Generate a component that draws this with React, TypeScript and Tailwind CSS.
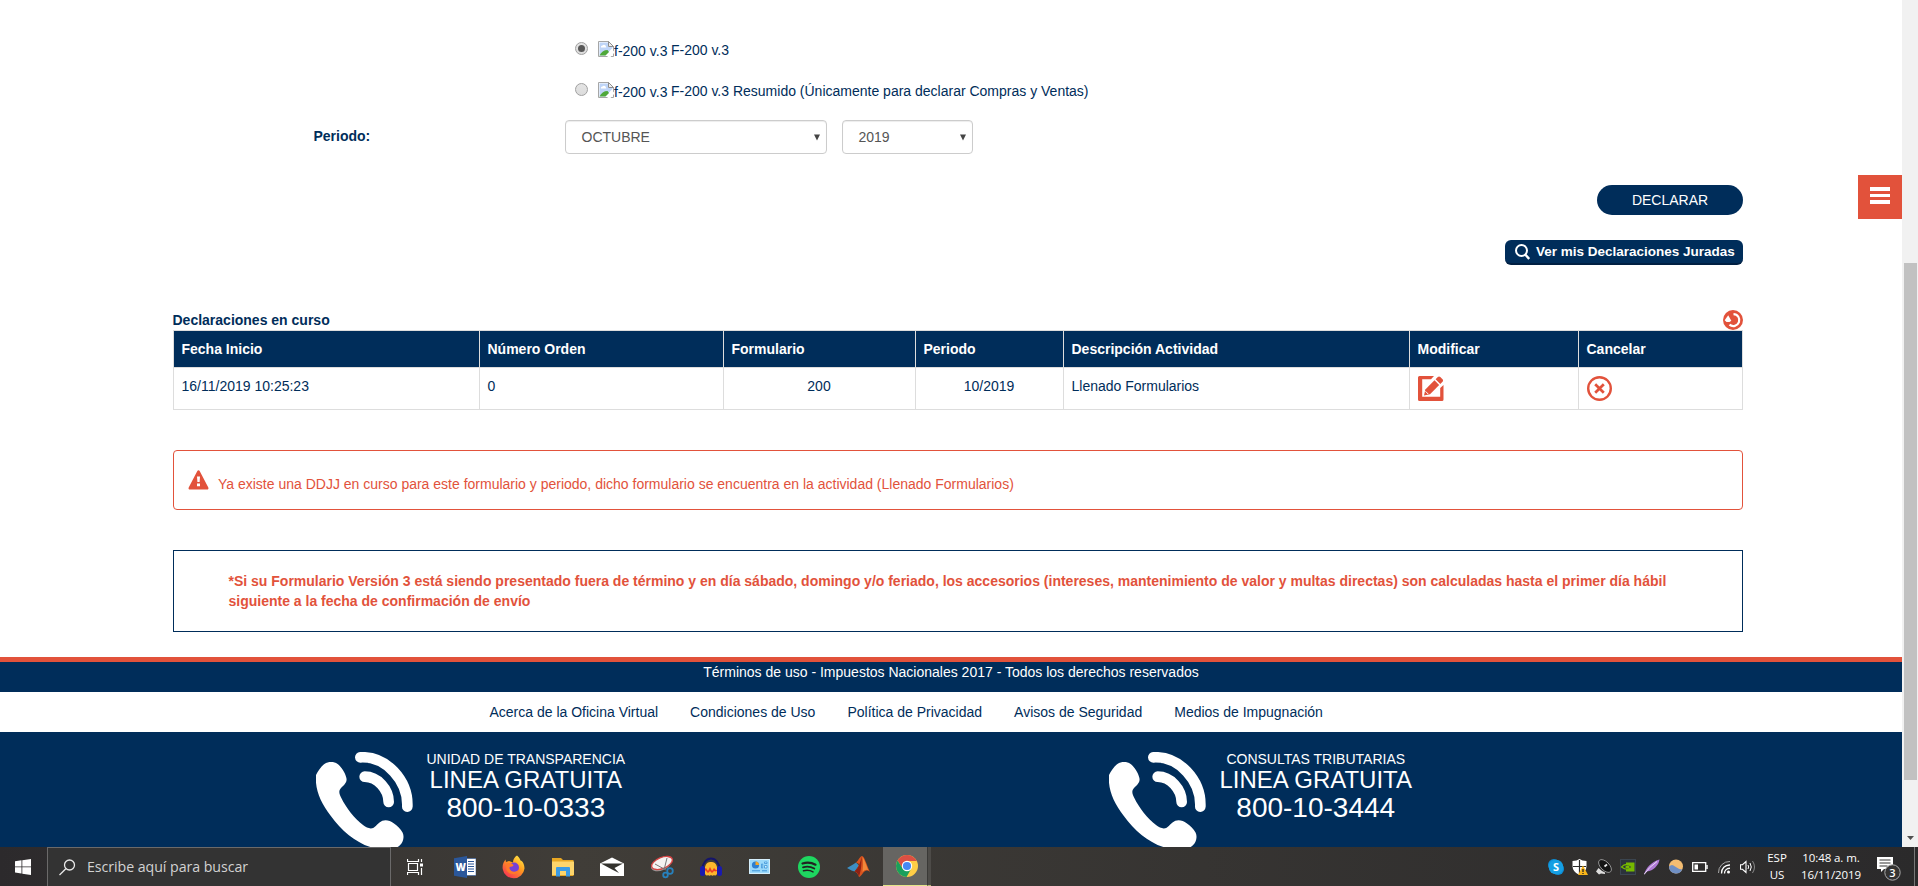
import type { ReactNode } from "react";

function BrokenImage() {
  return (
    <svg width="16" height="16" viewBox="0 0 16 16" className="mt-px shrink-0">
      <path d="M.5.5h10l5 5v10H.5z" fill="#fff" stroke="#a6a6a6" />
      <path d="M1.5 1.5h8.500v4.500h4.500v1L7 14.500H1.500z" fill="#bfd5f8" />
      <path d="M10.500.5v5h5z" fill="#eee" stroke="#8c8c8c" />
      <path d="M3 6.500a1.500 1.500 0 0 1 1.500-2 2 2 0 0 1 3.500 1.500l.5.5z" fill="#fff" />
      <path d="M1.500 14.500c1.500-3.500 4.500-5.500 8-5.500l1.500 2-3.500 3.500z" fill="#4fa83a" />
      <path d="M9 16 16 9.500v2.500L12.500 16z" fill="#fff" />
    </svg>
  );
}

function Radio({ checked }: { checked?: boolean }) {
  return (
    <span className="mt-[1.500px] mr-[10.500px] flex size-[13px] shrink-0 items-center justify-center rounded-full border border-[#a0a0a0] bg-gradient-to-b from-[#e4e4e4] to-[#dcdcdc]">
      {checked && <span className="size-[7px] rounded-full bg-[#585858]" />}
    </span>
  );
}

function FormOption({ label, checked }: { label: string; checked?: boolean }) {
  return (
    <label className="flex h-[41px] items-start whitespace-nowrap">
      <Radio checked={checked} />
      <BrokenImage />
      <span className="mt-px">f-200 v.3</span>
      <span className="ml-[3.500px]">{label}</span>
    </label>
  );
}

function Select({ value, className }: { value: string; className: string }) {
  return (
    <div
      className={`flex h-[34px] items-center justify-between rounded border border-[#ccc] bg-white pl-4 text-[#555] shadow-[inset_0_1px_1px_rgba(0,0,0,0.075)] ${className}`}
    >
      <span>{value}</span>
      <svg width="6" height="7" viewBox="0 0 6 7">
        <path d="M0 .5h6L3 6.500z" fill="#444" />
      </svg>
    </div>
  );
}

function Phone() {
  return (
    <svg width="97" height="95" viewBox="0 0 291 285" className="shrink-0">
      <path
        fill="#fff"
        d="M0 69C6 57 14 46 24 37c12-9 31-9 42 0 11 9 21 25 25 40 2 8 0 14-5 20-5 6-12 11-15 17-3 8 1 16 5 24 14 29 39 61 66 82 10 8 22 12 31 7 9-6 15-17 26-21 12-4 24 0 34 8 11 8 21 17 27 28 4 9 3 20-1 28-3 6-8 11-14 15h-82C117 270 75 234 44 191 20 159 3 127 0 92z"
      />
      <g fill="none" stroke="#fff" strokeWidth="32" strokeLinecap="round">
        <path d="M133 16c78-4 144 70 141 148" />
        <path d="M146 74c39 0 72 38 72 76" />
      </g>
    </svg>
  );
}

function Hotline({ title, phone, className }: { title: string; phone: string; className: string }) {
  return (
    <div className={`flex ${className}`}>
      <Phone />
      <div className="-mt-[3px] ml-[13.500px] flex flex-col items-center whitespace-nowrap text-white">
        <span className="h-[18px] leading-5">{title}</span>
        <span className="h-[26px] text-2xl leading-[26px]">LINEA GRATUITA</span>
        <span className="text-[28px] leading-[30px]">{phone}</span>
      </div>
    </div>
  );
}

const columns = [
  ["Fecha Inicio", "w-[306px]"],
  ["Número Orden", "w-[244px]"],
  ["Formulario", "w-[192px]"],
  ["Periodo", "w-[148px]"],
  ["Descripción Actividad", "w-[346px]"],
  ["Modificar", "w-[169px]"],
  ["Cancelar", "w-[164px]"],
];

function Cell({ children, center }: { children: ReactNode; center?: boolean }) {
  return (
    <td className={`border border-[#ddd] px-2 pt-2 align-top ${center ? "text-center" : ""}`}>{children}</td>
  );
}

function DeclarationsTable() {
  return (
    <table className="w-[1569px] table-fixed border-collapse">
      <thead>
        <tr className="h-[37px] bg-[#002d5a] text-left text-white">
          {columns.map(([name, width]) => (
            <th key={name} className={`border border-[#ddd] px-2 font-bold ${width}`}>
              {name}
            </th>
          ))}
        </tr>
      </thead>
      <tbody>
        <tr className="h-[42px]">
          <Cell>16/11/2019 10:25:23</Cell>
          <Cell>0</Cell>
          <Cell center>200</Cell>
          <Cell center>10/2019</Cell>
          <Cell>Llenado Formularios</Cell>
          <Cell>
            <svg width="26" height="25" viewBox="0 0 26 25" className="block">
              <path
                d="M1.500 0H16l-3 3.300H4.200v17.500h18V12L25.500 9v14.500q0 1.500-1.500 1.500H1.500Q0 25 0 23.500v-22Q0 0 1.500 0z"
                fill="#e2523b"
              />
              <path d="M6 19.500l1.300-6 9.200-9.200 4.700 4.700-9.200 9.200z" fill="#e2523b" />
              <path d="M17.600 3.200 19.800 1c.8-.8 1.800-.7 2.500 0l2.200 2.200c.8.8.8 1.700 0 2.500l-2.200 2.200z" fill="#e2523b" />
              <path d="M7.500 15.300 10.200 18" stroke="#fff" strokeWidth="1" />
            </svg>
          </Cell>
          <Cell>
            <svg width="25" height="25" viewBox="0 0 25 25" fill="none" stroke="#e2523b" className="block">
              <circle cx="12.500" cy="12.500" r="11.300" strokeWidth="2.400" />
              <path d="m8.200 8.200 8.600 8.600m0-8.600-8.600 8.600" strokeWidth="2.700" />
            </svg>
          </Cell>
        </tr>
      </tbody>
    </table>
  );
}

function WebPage() {
  return (
    <main className="relative h-[847px] w-[1902px] overflow-hidden bg-white">
      <section className="ml-[172.500px] h-[657px] w-[1570px] pt-10">
        <div className="pl-[402px]">
          <FormOption label="F-200 v.3" checked />
          <FormOption label="F-200 v.3 Resumido (Únicamente para declarar Compras y Ventas)" />
        </div>
        <div className="-mt-0.5 flex h-[34px]">
          <strong className="mt-1.5 w-[392px] pl-[141px]">Periodo:</strong>
          <Select value="OCTUBRE" className="w-[262px] pr-[6px]" />
          <Select value="2019" className="ml-[15px] w-[131px] pr-[6px]" />
        </div>
        <div className="mt-[31px] flex flex-col items-end">
          <button className="flex h-[30px] w-[146px] items-center justify-center rounded-full bg-[#002d5a] pl-px text-white">
            DECLARAR
          </button>
          <button className="mt-[25px] flex h-[25px] w-[238px] items-center rounded-[6px] border-b-2 border-[#001f42] bg-[#002d5a] pt-px pl-[10px] text-[13.500px] font-bold whitespace-nowrap text-white">
            <svg width="15" height="16" viewBox="0 0 15 16" fill="none" stroke="#fff" strokeWidth="2">
              <circle cx="6.500" cy="6.500" r="5.500" />
              <path d="m10.200 10.500 4 4.500" strokeWidth="2.400" />
            </svg>
            <span className="ml-[6.500px]">Ver mis Declaraciones Juradas</span>
          </button>
        </div>
        <div className="mt-[45px] flex h-5 items-start justify-between">
          <strong>Declaraciones en curso</strong>
          <svg width="20" height="20" viewBox="0 0 20 20">
            <circle cx="10" cy="10" r="10" fill="#e2523b" />
            <path d="M10.500 4.100a6 6 0 1 1-4 10.600" fill="none" stroke="#fff" strokeWidth="2.200" />
            <path d="M1.700 10.300 5.200 5.300 8.300 10.800 6.500 12H3.500z" fill="#fff" />
          </svg>
        </div>
        <DeclarationsTable />
        <div className="mt-[40px] flex h-[60px] rounded border border-[#e2523b] pt-[19px] pl-[14.500px] text-[#e2523b]">
          <svg width="21" height="20" viewBox="0 0 21 20">
            <path d="M9.200 1.200c.6-1.200 2-1.200 2.600 0l8.500 16.200c.5 1-.1 2.100-1.200 2.100H1.900c-1.100 0-1.700-1.100-1.200-2.100z" fill="#e2523b" />
            <path d="M9 6.500h3l-.4 5.500H9.400zM9 13.500h3v2.700H9z" fill="#fff" />
          </svg>
          <span className="mt-1 ml-[9px]">
            Ya existe una DDJJ en curso para este formulario y periodo, dicho formulario se encuentra en la actividad (Llenado Formularios)
          </span>
        </div>
        <p className="mt-10 h-[82px] border border-[#002d5a] px-[55px] pt-5 font-bold text-[#e2523b]">
          *Si su Formulario Versión 3 está siendo presentado fuera de término y en día sábado, domingo y/o feriado, los accesorios (intereses, mantenimiento de valor y multas directas) son calculadas hasta el primer día hábil
          <br />
          siguiente a la fecha de confirmación de envío
        </p>
      </section>
      <footer>
        <div className="h-[35px] border-t-[5px] border-[#e2523b] bg-[#002d5a] text-center text-white">
          Términos de uso - Impuestos Nacionales 2017 - Todos los derechos reservados
        </div>
        <nav className="flex h-10 items-center gap-8 pl-[489.500px] whitespace-nowrap">
          <a>Acerca de la Oficina Virtual</a>
          <a>Condiciones de Uso</a>
          <a>Política de Privacidad</a>
          <a>Avisos de Seguridad</a>
          <a>Medios de Impugnación</a>
        </nav>
        <div className="flex h-[115px] bg-[#002d5a] pt-5 pl-[316px]">
          <Hotline title="UNIDAD DE TRANSPARENCIA" phone="800-10-0333" className="w-[793px]" />
          <Hotline title="CONSULTAS TRIBUTARIAS" phone="800-10-3444" className="" />
        </div>
      </footer>
      <button className="absolute top-[175px] right-0 flex size-11 flex-col items-center gap-[3px] bg-[#e2523b] pt-3">
        <span className="h-[3.500px] w-5 bg-white" />
        <span className="h-[3.500px] w-5 bg-white" />
        <span className="h-[3.500px] w-5 bg-white" />
      </button>
    </main>
  );
}

function Scrollbar() {
  return (
    <div className="flex h-[847px] w-4 flex-col items-center bg-[#f1f1f1] pt-[263px]">
      <div className="h-[517px] w-[13px] bg-[#c1c1c1]" />
      <svg width="7" height="4" viewBox="0 0 7 4" className="mt-[56px]">
        <path d="M0 0h7L3.500 4z" fill="#505050" />
      </svg>
    </div>
  );
}

function TaskItem({ children }: { children: ReactNode }) {
  return <div className="flex h-[39px] w-[49.200px] items-center justify-center">{children}</div>;
}

function TaskApps() {
  return (
    <div className="flex">
      <TaskItem>
        <svg width="17" height="16" viewBox="0 0 17 16" fill="none" stroke="#fff">
          <path d="M.5 0v2.500h11V0M.5 16v-2.500h11V16M1.500 4.500h9v7h-9zM14.500 0v3M14.500 9v7" strokeWidth="1.200" />
          <path d="M13 4.500h3v3h-3z" fill="#fff" stroke="none" />
        </svg>
      </TaskItem>
      <TaskItem>
        <svg width="22" height="22" viewBox="0 0 22 22">
          <path d="M12 2.500h10v17H12z" fill="#fff" stroke="#2b579a" strokeWidth=".6" />
          <path d="M14 5.500h6M14 8h6M14 10.500h6M14 13h6M14 15.500h6" stroke="#2b579a" strokeWidth="1.200" />
          <path d="m0 2.200 13-2.200v22L0 19.800z" fill="#2b579a" />
          <text x="1.400" y="14.700" fontSize="10" fontWeight="800" fill="#fff" fontFamily="Open Sans, sans-serif">W</text>
        </svg>
      </TaskItem>
      <TaskItem>
        <svg width="24" height="24" viewBox="0 0 24 24">
          <defs>
            <linearGradient id="fox" x1=".9" y1="0" x2=".2" y2="1">
              <stop offset="0" stopColor="#fff04a" />
              <stop offset=".45" stopColor="#ff9a1f" />
              <stop offset="1" stopColor="#f72d56" />
            </linearGradient>
          </defs>
          <path d="M15 .5c2 2 3 3 3.500 5 2 .3 4 4 4 8A11 11 0 0 1 .7 14C.2 10 1.500 7 3.500 4.500L4 7l3-1 4 1.500c0-3 1.500-5.500 4-7z" fill="url(#fox)" />
          <circle cx="12" cy="12.500" r="5" fill="#7540d8" />
          <path d="M4 9c3-1.500 5-1 7 .5 1 .8 0 2.200-2 2.200-1.300 0-2 1-1.300 2.300C9 17 14 18 17.500 14c-1 6-10 7-13 1z" fill="#ff7a2a" />
        </svg>
      </TaskItem>
      <TaskItem>
        <svg width="22" height="20" viewBox="0 0 22 20">
          <path d="M0 1h9l2 2h10.500v16H0z" fill="#e8a723" />
          <path d="M0 4.500h22V18H0z" fill="#fdd56c" />
          <path d="M4 19.500V11q0-1 1-1h12q1 0 1 1v8.500h-4V14H8v5.500z" fill="#3b9be4" />
        </svg>
      </TaskItem>
      <TaskItem>
        <svg width="24" height="20" viewBox="0 0 24 20">
          <path d="M0 6.500 12 .5l12 6V19H0z" fill="#fff" />
          <path d="M1 6.500h22l-8.500 4.500 4.500 5-7-3.500z" fill="#33322e" />
        </svg>
      </TaskItem>
      <TaskItem>
        <svg width="24" height="24" viewBox="0 0 24 24">
          <ellipse cx="11" cy="9.500" rx="10.500" ry="6" fill="#999" transform="rotate(-22 11 9.500)" />
          <ellipse cx="12" cy="8" rx="11" ry="5.500" fill="#f5f2f1" stroke="#d64545" strokeWidth="1.300" transform="rotate(-22 12 8)" />
          <path d="m5 9 11 6M17 3l-3 12" stroke="#777" strokeWidth="1" />
          <g fill="none" stroke="#2781bd" strokeWidth="1.800">
            <circle cx="20" cy="16" r="2.800" />
            <circle cx="15.500" cy="20" r="2.300" />
          </g>
        </svg>
      </TaskItem>
      <TaskItem>
        <svg width="22" height="20" viewBox="0 0 22 20">
          <path d="M2.500 12a8.500 10.500 0 0 1 17 0" fill="none" stroke="#15156b" strokeWidth="1.800" />
          <path d="M5 10c1-4 3-5 6-5s5 1 6 5v7q-1.500 2.500-3 1-1.500 1.500-3 0-1.500 1.500-3 0-1.500 1.500-3-1z" fill="#fdb72c" />
          <path d="m4 12.500 2-1.500 2 3 2-4 2 4 2-3 2 2 2-.5-2 2-2-.5-2 2-2-2-2 2-2-2z" fill="#ee3b22" />
          <rect x="0" y="9" width="5" height="10" rx="2.500" fill="#1a1ab0" />
          <rect x="17" y="9" width="5" height="10" rx="2.500" fill="#1a1ab0" />
        </svg>
      </TaskItem>
      <TaskItem>
        <svg width="21" height="15" viewBox="0 0 21 15">
          <path d="M0 0h21v15H0z" fill="#9ad8fa" />
          <path d="M.5.5h20v14H.5z" fill="none" stroke="#d6effc" />
          <circle cx="6.500" cy="6" r="3.600" fill="#2d7fd0" />
          <path d="M6.500 6V2.400A3.600 3.600 0 0 1 10 6z" fill="#f5a623" />
          <path d="M12.500 5h1.200v4h-1.200zM15.500 3h2.500v1.500h-2.500zM15.500 6.500h2.500V9h-2.500z" fill="#d6effc" stroke="#3b94d9" strokeWidth=".8" />
          <path d="M3 11.800h8M13 11.800h5" stroke="#3b94d9" />
        </svg>
      </TaskItem>
      <TaskItem>
        <svg width="22" height="22" viewBox="0 0 22 22">
          <circle cx="11" cy="11" r="11" fill="#1ed760" />
          <g fill="none" stroke="#222" strokeLinecap="round">
            <path d="M4.500 7.500c4-1.300 9.500-.8 13 1.200" strokeWidth="2.200" />
            <path d="M5 11.300c4-1.200 8-.6 11.300 1.200" strokeWidth="1.800" />
            <path d="M5.500 14.800c3.500-.9 6.700-.5 9.500 1.100" strokeWidth="1.500" />
          </g>
        </svg>
      </TaskItem>
      <TaskItem>
        <svg width="23" height="21" viewBox="0 0 23 21">
          <path d="m0 12 6-3.500 3-2 3 3-4.500 6-3-1z" fill="#3d8fc4" />
          <path d="M9 6.500C12 4 13 0 15 0c2.500 0 4.500 9 8 16-3-2.500-5-1.500-7 1-1.500 2-2.500 3.500-4 4-1-3-2.500-5-4.500-5.500C11 13 11 10 12 8z" fill="#d9531e" />
          <path d="M15 .5c-1 6 0 12-3 20-1-3-2.500-4.500-4.500-5C12 12 13 6 15 .5z" fill="#8e2215" />
          <path d="M15.500 1c1 5 .5 9 0 15 2-2 4-3 6-1.500C19 9 17.500 3 15.500 1z" fill="#f2893a" />
        </svg>
      </TaskItem>
    </div>
  );
}

function Chrome() {
  return (
    <svg width="22" height="22" viewBox="0 0 22 22">
      <circle cx="11" cy="11" r="11" fill="#ffcd46" />
      <path d="M1.500 5.500a11 11 0 0 1 19 0L20.600 6H11l-4.300 7.500z" fill="#dd4f43" />
      <path d="M1.500 5.500A11 11 0 0 0 10.500 22l4.800-8.500h-8.600z" fill="#1a9f5c" />
      <circle cx="11" cy="11" r="5.200" fill="#fff" />
      <circle cx="11" cy="11" r="4.100" fill="#4688f4" />
    </svg>
  );
}

function Tray() {
  return (
    <div className="flex h-4 items-center gap-2">
      <svg width="16" height="16" viewBox="0 0 16 16">
        <rect width="12" height="12" rx="6" fill="#0d8fd8" />
        <rect x="4" y="4" width="12" height="12" rx="6" fill="#0d8fd8" />
        <circle cx="8" cy="8" r="7.300" fill="#169fe3" />
        <text x="8" y="12" fontSize="11" fontWeight="700" textAnchor="middle" fill="#fff" fontFamily="Open Sans, sans-serif">S</text>
      </svg>
      <svg width="16" height="16" viewBox="0 0 16 16">
        <path d="M7.500 0Q10 2 14.500 2v5q0 6-7 9-7-3-7-9V2Q5 2 7.500 0z" fill="#fff" />
        <path d="M7.500 1v14M1 7.500h13" stroke="#2b2b2b" strokeWidth="1.200" />
        <path d="m11 6.500 5 9.500H6z" fill="#f9b51a" />
        <path d="M11 10v3M11 14v1" stroke="#222" strokeWidth="1.300" />
      </svg>
      <svg width="16" height="16" viewBox="0 0 16 16">
        <ellipse cx="9" cy="7" rx="8" ry="4.300" transform="rotate(45 9 7)" fill="#151515" stroke="#999" strokeWidth=".9" />
        <path d="M8.500 7.500 11 5.500" stroke="#eee" strokeWidth="1.800" />
        <path d="M0 12.500 2.500 9 6 12l3 1.500V15l-4-.5-2 1z" fill="#ddd" />
      </svg>
      <svg width="16" height="16" viewBox="0 0 16 16">
        <rect x=".5" y=".5" width="15" height="15" fill="#2b323b" stroke="#3b4550" />
        <path d="M6 3.500h8.500v9H6z" fill="#76b900" />
        <path d="M1.500 8Q6 3 12.500 8 7 12.500 1.500 8z" fill="#2b323b" stroke="#76b900" strokeWidth="1.200" />
        <ellipse cx="7.500" cy="8" rx="2.200" ry="1.500" fill="#76b900" />
      </svg>
      <svg width="16" height="16" viewBox="0 0 16 16">
        <path d="M0 15.500C2 9 7 3 15.500.5 15 6 9 12 3 12.500z" fill="#b07ad6" />
        <path d="M0 15.500Q5 8 13 2.500" fill="none" stroke="#eadcf5" strokeWidth="1" />
      </svg>
      <svg width="16" height="16" viewBox="0 0 16 16">
        <circle cx="8" cy="7.500" r="7" fill="#f4bd72" />
        <path d="M1 7.500q3-3 6 0 4 3 7.300 3A7 7 0 0 1 1 7.500z" fill="#6f8fc4" />
      </svg>
      <svg width="16" height="10" viewBox="0 0 16 10">
        <path d="M.7.700h13v8.600H.7z" fill="none" stroke="#fff" strokeWidth="1.300" />
        <path d="M2.500 2.500h3.500v5H2.500zM14.300 3h1.400v4h-1.400z" fill="#fff" />
      </svg>
      <svg width="16" height="14" viewBox="0 0 16 14" fill="none" stroke="#fff">
        <path d="M2.500 13A11 11 0 0 1 14 1.500" stroke="#aaa" />
        <path d="M5.500 13.500a8 8 0 0 1 8.500-8.500M8.500 13.500a5 5 0 0 1 5.500-5.200" strokeWidth="1.300" />
        <circle cx="12.500" cy="12" r="1.500" fill="#fff" stroke="none" />
      </svg>
      <svg width="16" height="14" viewBox="0 0 16 14" fill="none" stroke="#fff">
        <path d="M.5 4.700h2L6 1.500v11L2.500 9.300h-2z" strokeWidth="1.100" />
        <path d="M8 5q1.200 2 0 4M10 3q2.500 4 0 8" />
        <path d="M12.500 1q4 6 0 12" stroke="#888" />
      </svg>
    </div>
  );
}

function Taskbar() {
  return (
    <div className="flex h-[39px] w-[1918px] bg-gradient-to-r from-[#2c2a2c] via-[#403d38] via-30% to-[#2b2a2b] font-['Open_Sans',sans-serif]">
      <div className="flex w-[47px] items-center justify-center pr-0.5">
        <svg width="16" height="16" viewBox="0 0 16 16" fill="#fff">
          <path d="M0 2.200 6.500 1.300v6.200H0zM7.300 1.200 16 0v7.500H7.300zM0 8.300h6.500v6.200L0 13.600zM7.300 8.300H16V16l-8.700-1.200z" />
        </svg>
      </div>
      <div className="flex w-[344px] items-center border border-b-0 border-[#6b6a6a] bg-[#333333] pl-[11px] text-[#d2d2d2]">
        <svg width="17" height="17" viewBox="0 0 17 17" fill="none" stroke="#e8e8e8" strokeWidth="1.300">
          <circle cx="10.500" cy="6" r="5" />
          <path d="M6.800 9.700.5 16" />
        </svg>
        <span className="ml-[11px] text-[14.200px] whitespace-nowrap tracking-[-0.05px]">Escribe aquí para buscar</span>
      </div>
      <TaskApps />
      <div className="flex h-[39px] w-11 shrink-0 items-center justify-center border-b border-[#e4e489] bg-[#666562] pl-1">
        <Chrome />
      </div>
      <div className="flex h-[39px] w-1 shrink-0 border-b border-l border-[#3a3937] border-b-[#b9ba72] bg-[#4d4b48]" />
      <div className="ml-auto flex items-center pr-[3px] text-[11.500px] leading-[17px] text-white">
        <Tray />
        <div className="-mt-px ml-[9px] w-[24px] text-center">
          ESP
          <br />
          US
        </div>
        <div className="-mt-px ml-[10px] w-[64px] text-center whitespace-nowrap tracking-[-0.1px]">
          10:48 a. m.
          <br />
          16/11/2019
        </div>
        <div className="ml-[14px] h-[22px] w-[37px]">
          <svg width="25" height="25" viewBox="0 0 25 25">
            <path d="M0 1h16v12H7l-3 3v-3H0z" fill="#fff" />
            <path d="M2.500 4h11M2.500 7h11M2.500 10h8" stroke="#333" />
            <circle cx="15.500" cy="16.500" r="7.700" fill="#343332" stroke="#aaa" />
            <text x="15.500" y="20.500" fontSize="11" fontWeight="600" textAnchor="middle" fill="#fff">3</text>
          </svg>
        </div>
        <div className="h-[39px] w-px bg-[#777]" />
      </div>
    </div>
  );
}

export default function App() {
  return (
    <div className="h-[886px] w-[1918px] overflow-hidden bg-white font-['Liberation_Sans',Arial,sans-serif] text-sm text-[#002d5a]">
      <div className="flex">
        <WebPage />
        <Scrollbar />
      </div>
      <Taskbar />
    </div>
  );
}
